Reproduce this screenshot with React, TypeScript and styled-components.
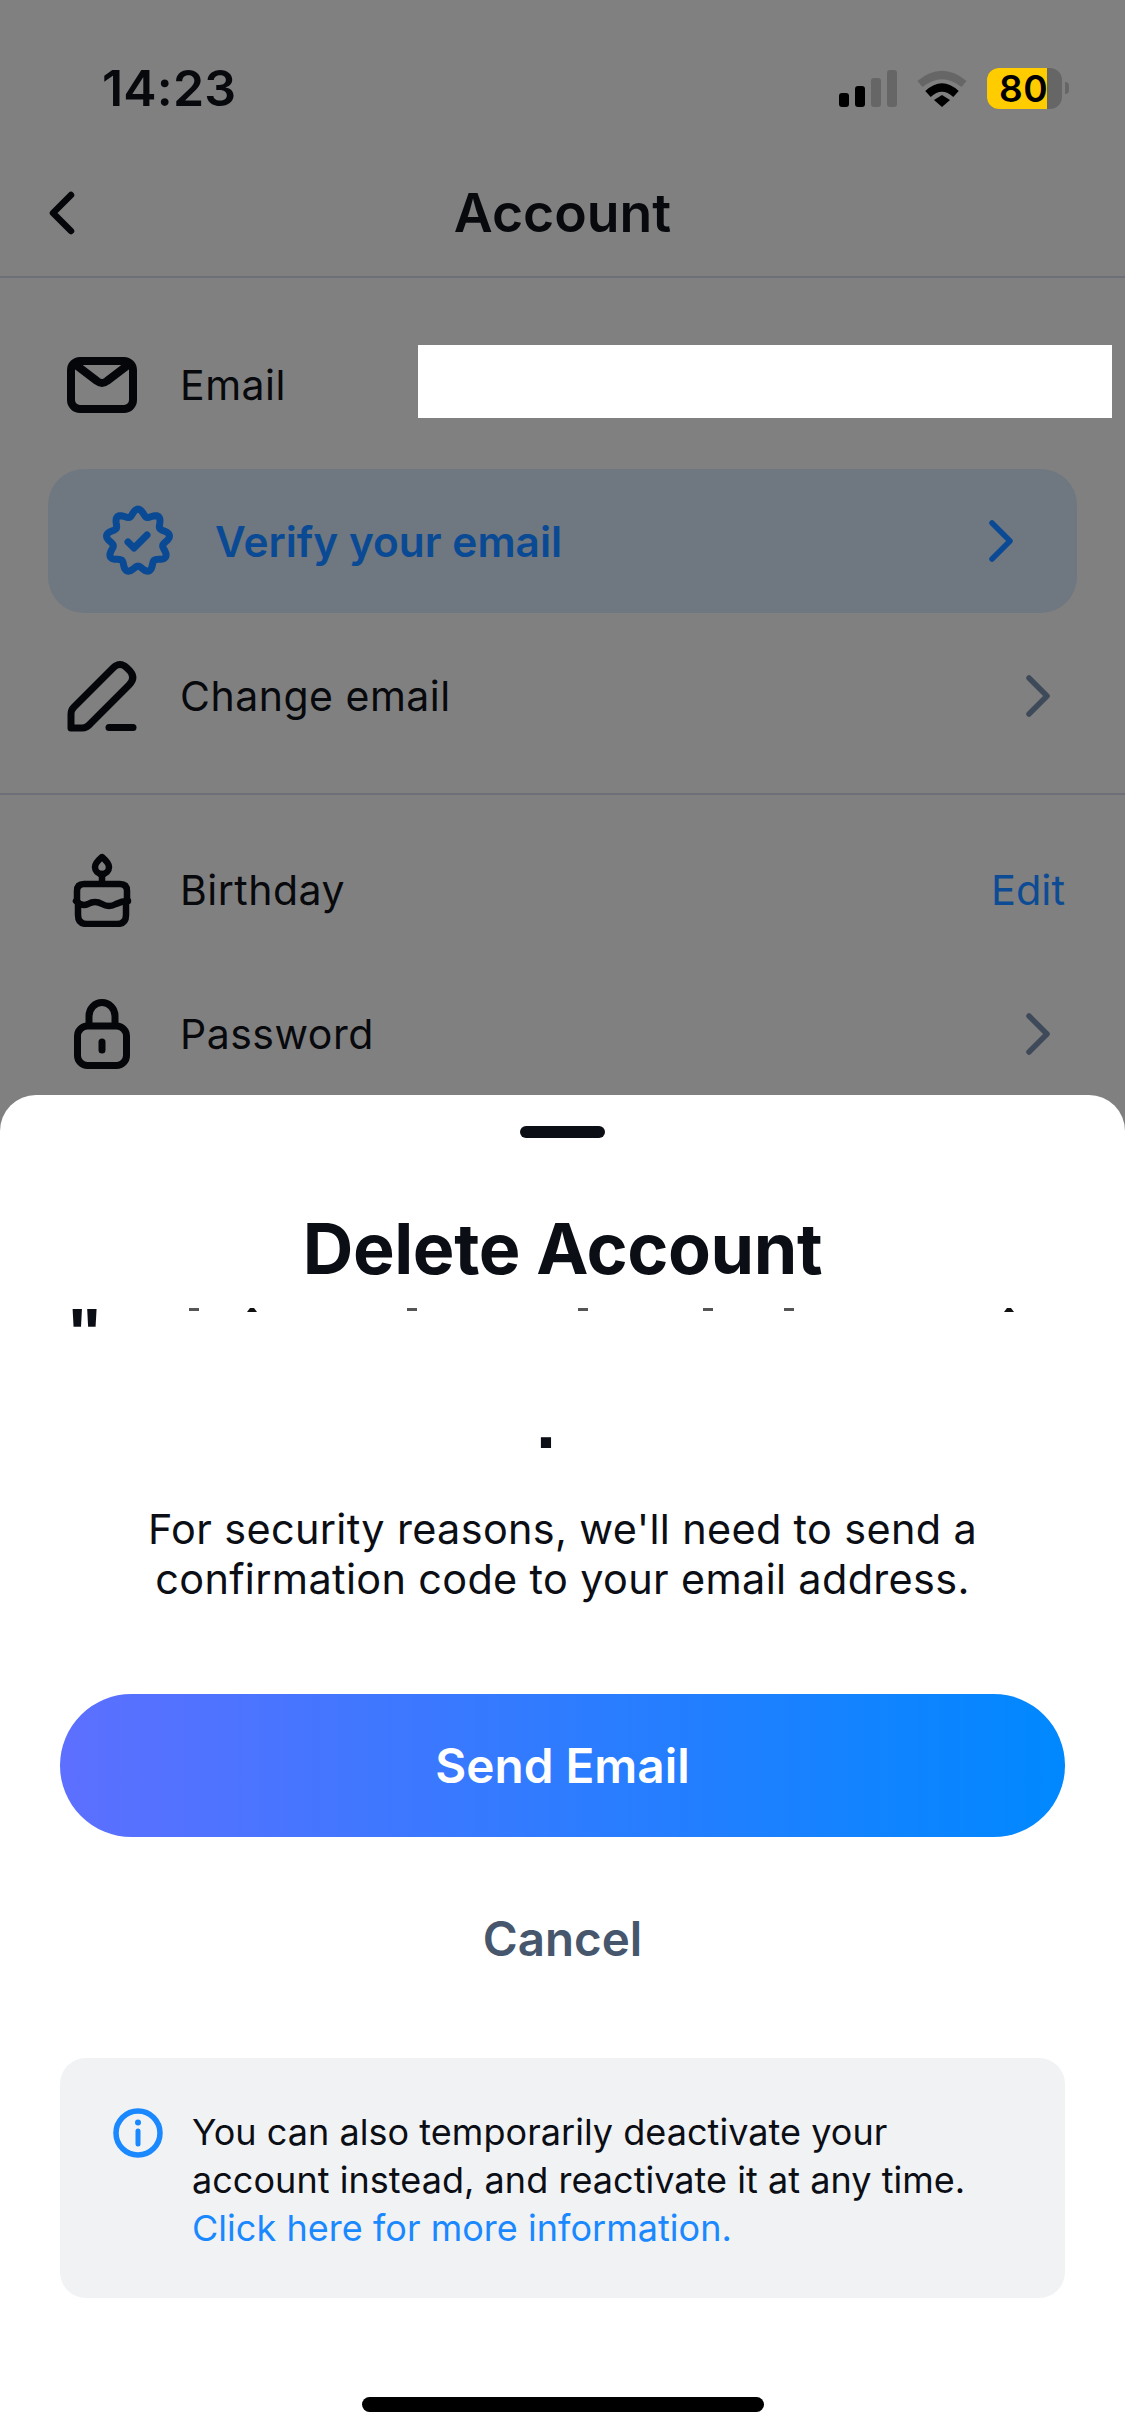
import React from "react";
import styled, { createGlobalStyle } from "styled-components";

const GlobalStyle = createGlobalStyle`
  html, body { margin: 0; padding: 0; background: #808080; }
  * { box-sizing: border-box; }
  #root { width: 1125px; height: 2436px; }
`;

const Screen = styled.div`
  position: relative;
  width: 1125px;
  height: 2436px;
  overflow: hidden;
  background: #808080;
  color: #08090d;
  font-family: Inter, "Liberation Sans", sans-serif;
`;

const StatusBar = styled.div`
  height: 176px;
  display: flex;
  align-items: center;
  justify-content: space-between;
  padding: 0 56px 0 102px;
`;

const Time = styled.span`
  font-size: 50px;
  font-weight: 600;
  letter-spacing: 0.2px;
`;

const StatusIcons = styled.div`
  display: flex;
  align-items: center;
  gap: 20px;
`;

const SignalBars = styled.div`
  display: flex;
  align-items: flex-end;
  gap: 6px;
  height: 37px;
`;

const SignalBar = styled.i<{ $h: number; $on?: boolean }>`
  display: block;
  width: 10px;
  height: ${(p) => p.$h}px;
  border-radius: 3px;
  background: ${(p) => (p.$on ? "#000" : "#666")};
`;

const Battery = styled.div`
  position: relative;
  width: 75px;
  height: 41px;
  border-radius: 12px;
  background: #666;
`;

const BatteryFill = styled.div`
  width: 60px;
  height: 100%;
  border-radius: 12px 0 0 12px;
  background: #ffcc00;
`;

const BatteryLevel = styled.span`
  position: absolute;
  left: 12px;
  top: 0;
  line-height: 41px;
  font-size: 37px;
  font-weight: 600;
  letter-spacing: 0.5px;
  color: #000;
`;

const BatteryWrap = styled.div`
  display: flex;
  align-items: center;
  gap: 3px;
`;

const BatteryNub = styled.i`
  display: block;
  width: 4px;
  height: 12px;
  border-radius: 0 6px 6px 0;
  background: #666;
`;

const NavBar = styled.header`
  position: relative;
  height: 102px;
  padding-bottom: 28px;
  display: flex;
  align-items: center;
  justify-content: center;
  border-bottom: 2px solid #6d7079;
`;

const NavBack = styled.svg`
  position: absolute;
  left: 48px;
  top: 15px;
`;

const NavTitle = styled.h1`
  margin: 0;
  font-size: 53.5px;
  font-weight: 600;
`;

const Section = styled.section<{ $pad: string; $line?: boolean }>`
  display: flex;
  flex-direction: column;
  padding: ${(p) => p.$pad};
  border-bottom: ${(p) => (p.$line ? "2px solid #6d7079" : "none")};
`;

const Row = styled.div<{ $mt?: number }>`
  position: relative;
  height: 94px;
  margin-top: ${(p) => p.$mt ?? 0}px;
  display: flex;
  align-items: center;
  padding: 0 27px 0 19px;
`;

const IconSlot = styled.div`
  width: 70px;
  flex: none;
  display: flex;
  align-items: center;
  justify-content: center;
  margin-right: 43px;
`;

const Label = styled.span`
  flex: 1;
  font-size: 41px;
  letter-spacing: 0.5px;
`;

const Redaction = styled.div`
  position: absolute;
  left: 370px;
  top: 7px;
  width: 694px;
  height: 73px;
  background: #fff;
`;

const VerifyCard = styled.div`
  height: 144px;
  margin-top: 37px;
  display: flex;
  align-items: center;
  padding: 0 64px 0 54px;
  border-radius: 36px;
  background: #6f7780;
`;

const VerifyText = styled.span`
  flex: 1;
  margin-left: 41px;
  font-size: 42.400px;
  font-weight: 600;
  color: #0a4a94;
`;

const EditLink = styled.span`
  font-size: 41.500px;
  color: #0d4c94;
  margin-right: -15px;
`;

const Sheet = styled.div`
  position: absolute;
  left: 0;
  right: 0;
  bottom: 0;
  height: 1341px;
  display: flex;
  flex-direction: column;
  align-items: center;
  padding: 31px 60px 0;
  border-radius: 36px 36px 0 0;
  background: #fff;
  color: #0b0e14;
`;

const Handle = styled.div`
  width: 85px;
  height: 12px;
  border-radius: 6px;
  background: #0b0e14;
`;

const SheetTitle = styled.h2`
  margin: 68px 0 0;
  height: 86px;
  line-height: 86px;
  font-size: 70px;
  font-weight: 700;
  letter-spacing: -0.4px;
`;

const ClippedLine = styled.div`
  align-self: stretch;
  height: 21px;
  margin: 16px 0 0 8px;
  display: flex;
  align-items: flex-start;
`;

const QuoteMark = styled.span`
  width: 34px;
  height: 21px;
  font-family: "Liberation Sans", Arial, sans-serif;
  font-size: 70px;
  line-height: 52px;
  font-weight: 700;
`;

const Fragment = styled.i<{ $gap: number; $peak?: boolean }>`
  display: block;
  flex: none;
  width: 10px;
  height: ${(p) => (p.$peak ? 4 : 3)}px;
  margin-left: ${(p) => p.$gap}px;
  background: ${(p) => (p.$peak ? "#111" : "#555")};
  clip-path: ${(p) => (p.$peak ? "polygon(30% 0, 70% 0, 100% 100%, 0 100%)" : "none")};
`;

const ClippedPeriod = styled.div`
  width: 20px;
  height: 10px;
  margin: 89px 0 0 -33px;
  font-family: "Liberation Sans", Arial, sans-serif;
  font-size: 72px;
  font-weight: 700;
  line-height: 10px;
`;

const SheetBody = styled.p`
  margin: 76px 0 0;
  width: 100%;
  text-align: center;
  font-size: 41.400px;
  line-height: 50px;
  letter-spacing: 0.35px;
`;

const SendButton = styled.button`
  width: 1005px;
  height: 143px;
  margin-top: 90px;
  flex: none;
  border: 0;
  border-radius: 72px;
  background: linear-gradient(90deg, #5d6fff, #0088ff);
  color: #fff;
  font-family: inherit;
  font-size: 47.700px;
  font-weight: 600;
`;

const CancelButton = styled.button`
  height: 90px;
  margin-top: 56px;
  flex: none;
  border: 0;
  background: none;
  color: #46566c;
  font-family: inherit;
  font-size: 47.500px;
  font-weight: 600;
`;

const InfoBox = styled.div`
  width: 1005px;
  height: 240px;
  margin-top: 75px;
  flex: none;
  display: flex;
  align-items: flex-start;
  gap: 29px;
  padding: 50px 53px 0;
  border-radius: 26px;
  background: #f1f2f4;
`;

const InfoText = styled.p`
  margin: 0;
  font-size: 36px;
  line-height: 48px;
  letter-spacing: 0.04px;
  white-space: nowrap;
`;

const InfoLink = styled.span`
  color: #1a88ff;
`;

const HomeBar = styled.div`
  width: 402px;
  height: 15px;
  margin-top: 99px;
  flex: none;
  border-radius: 8px;
  background: #000;
`;

const Ink = styled.g.attrs({ fill: "none", strokeLinecap: "round", strokeLinejoin: "round" })``;

const Chevron = ({ color }: { color: string }) => (
  <svg width="24" height="42" viewBox="0 0 24 42">
    <path d="M3 3 L21 21 L3 39" fill="none" stroke={color} strokeWidth="5.500" strokeLinecap="round" strokeLinejoin="round" />
  </svg>
);

const Wifi = () => (
  <svg width="50" height="38" viewBox="0 0 50 38">
    <path d="M3 15 Q25 -3 47 15" fill="none" stroke="#666" strokeWidth="8" />
    <path d="M11 25 Q25 12 39 25" fill="none" stroke="#000" strokeWidth="8" />
    <path d="M17 31 L25 26 L33 31 L25 38 Z" fill="#000" />
  </svg>
);

const MailIcon = () => (
  <svg width="70" height="56" viewBox="0 0 70 56">
    <Ink stroke="#05060a" strokeWidth="8">
      <rect x="4" y="4" width="62" height="48" rx="9" />
      <path d="M9 8 L30 24 Q35 28 40 24 L61 8" />
    </Ink>
  </svg>
);

const PencilIcon = () => (
  <svg width="70" height="72" viewBox="0 0 70 72">
    <Ink stroke="#05060a" strokeWidth="7">
      <path d="M4 68 V54 Q4 50 7 47 L46 8 Q53 1 60 8 L63 11 Q69 18 62 25 L24 63 Q20 68 15 68 Z" />
      <path d="M42 67.500 H66" />
    </Ink>
  </svg>
);

const CakeIcon = () => (
  <svg width="60" height="74" viewBox="0 0 60 74">
    <Ink stroke="#05060a" strokeWidth="6.500">
      <path d="M30 4 Q37 10 37 14 A7 7 0 0 1 23 14 Q23 10 30 4 Z" />
      <path d="M30 21 V30" />
      <path d="M5 48 V38 Q5 31 12 31 H48 Q55 31 55 38 V48" />
      <path d="M4 48 Q10 54 16 51 Q23 47 30 51 Q37 55 44 51 Q50 48 56 48" />
      <path d="M6 50 V62 Q6 71 15 71 H45 Q54 71 54 62 V50" />
    </Ink>
  </svg>
);

const LockIcon = () => (
  <svg width="56" height="70" viewBox="0 0 56 70">
    <Ink stroke="#05060a" strokeWidth="7">
      <rect x="3.500" y="27" width="49" height="39.500" rx="10" />
      <path d="M15 26 V17 A13 13.500 0 0 1 41 17 V26" />
      <path d="M28 43 V51" />
    </Ink>
  </svg>
);

const badgePath = (() => {
  const points: string[] = [];
  for (let i = 0; i <= 180; i++) {
    const t = (i / 180) * Math.PI * 2;
    const r = 28.5 + 3.4 * Math.cos(9 * t);
    const x = 36 + r * Math.sin(t);
    const y = 36 - r * Math.cos(t);
    points.push(`${i === 0 ? "M" : "L"}${x.toFixed(2)} ${y.toFixed(2)}`);
  }
  return points.join(" ") + " Z";
})();

const BadgeIcon = () => (
  <svg width="72" height="72" viewBox="0 0 72 72">
    <Ink stroke="#0a4a94" strokeWidth="7">
      <path d={badgePath} />
      <path d="M26 37 L32 43 L45 30" />
    </Ink>
  </svg>
);

const InfoGlyph = styled.svg`
  flex: none;
`;

const InfoIcon = () => (
  <InfoGlyph width="50" height="50" viewBox="0 0 50 50">
    <circle cx="25" cy="25" r="22" fill="none" stroke="#1a88ff" strokeWidth="5.500" />
    <circle cx="25" cy="14.500" r="3" fill="#1a88ff" />
    <path d="M25 23 V36" fill="none" stroke="#1a88ff" strokeWidth="5" strokeLinecap="round" />
  </InfoGlyph>
);

const fragments = [
  { gap: 87 },
  { gap: 48, peak: true },
  { gap: 150 },
  { gap: 161 },
  { gap: 115 },
  { gap: 71 },
  { gap: 210, peak: true },
];

export default function App() {
  return (
    <Screen>
      <GlobalStyle />
      <StatusBar>
        <Time>14:23</Time>
        <StatusIcons>
          <SignalBars>
            <SignalBar $h={14} $on />
            <SignalBar $h={21} $on />
            <SignalBar $h={29} />
            <SignalBar $h={37} />
          </SignalBars>
          <Wifi />
          <BatteryWrap>
            <Battery>
              <BatteryFill />
              <BatteryLevel>80</BatteryLevel>
            </Battery>
            <BatteryNub />
          </BatteryWrap>
        </StatusIcons>
      </StatusBar>
      <NavBar>
        <NavBack width="30" height="44" viewBox="0 0 30 44">
          <path d="M23 4 L5 22 L23 40" fill="none" stroke="#05060a" strokeWidth="6.500" strokeLinecap="round" strokeLinejoin="round" />
        </NavBack>
        <NavTitle>Account</NavTitle>
      </NavBar>
      <Section $pad="60px 48px 50px" $line>
        <Row>
          <IconSlot><MailIcon /></IconSlot>
          <Label>Email</Label>
          <Redaction />
        </Row>
        <VerifyCard>
          <BadgeIcon />
          <VerifyText>Verify your email</VerifyText>
          <Chevron color="#0a4a94" />
        </VerifyCard>
        <Row $mt={36}>
          <IconSlot><PencilIcon /></IconSlot>
          <Label>Change email</Label>
          <Chevron color="#3e4a5a" />
        </Row>
      </Section>
      <Section $pad="48px 48px 0">
        <Row>
          <IconSlot><CakeIcon /></IconSlot>
          <Label>Birthday</Label>
          <EditLink>Edit</EditLink>
        </Row>
        <Row $mt={50}>
          <IconSlot><LockIcon /></IconSlot>
          <Label>Password</Label>
          <Chevron color="#3e4a5a" />
        </Row>
      </Section>
      <Sheet>
        <Handle />
        <SheetTitle>Delete Account</SheetTitle>
        <ClippedLine>
          <QuoteMark>"</QuoteMark>
          {fragments.map((f, i) => (
            <Fragment key={i} $gap={f.gap} $peak={f.peak} />
          ))}
        </ClippedLine>
        <ClippedPeriod>.</ClippedPeriod>
        <SheetBody>
          For security reasons, we'll need to send a
          <br />
          confirmation code to your email address.
        </SheetBody>
        <SendButton>Send Email</SendButton>
        <CancelButton>Cancel</CancelButton>
        <InfoBox>
          <InfoIcon />
          <InfoText>
            You can also temporarily deactivate your
            <br />
            account instead, and reactivate it at any time.
            <br />
            <InfoLink>Click here for more information.</InfoLink>
          </InfoText>
        </InfoBox>
        <HomeBar />
      </Sheet>
    </Screen>
  );
}
